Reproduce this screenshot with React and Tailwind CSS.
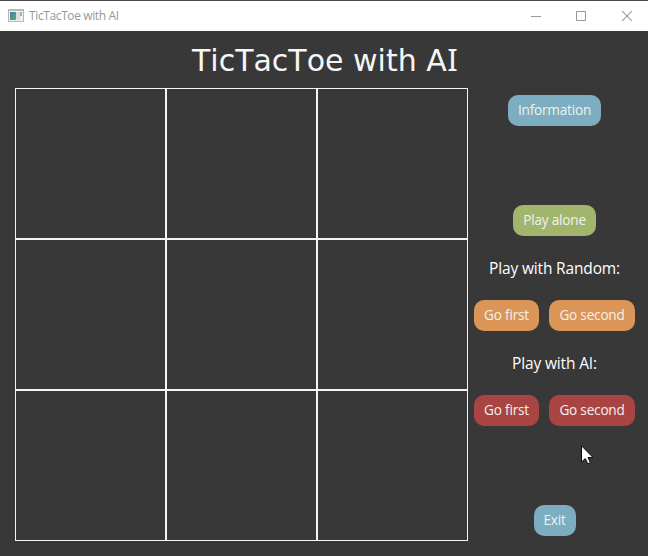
function PillButton({ children, className }) {
  return (
    <button
      type="button"
      className={`h-[31px] shrink-0 rounded-[10px] pb-px text-center whitespace-nowrap text-[13.6px] leading-[30px] tracking-[-0.2px] text-[#f1f1ee] ${className}`}
    >
      {children}
    </button>
  );
}

function AppIcon() {
  return (
    <svg width="16" height="14" viewBox="0 0 16 14" shapeRendering="crispEdges" aria-hidden="true">
      <defs>
        <linearGradient id="pane" x1="0" y1="0" x2="1" y2="1">
          <stop offset="0" stopColor="#4a7fa8" />
          <stop offset="1" stopColor="#4fae78" />
        </linearGradient>
      </defs>
      <rect x="0" y="0" width="16" height="13" fill="#b5b8bd" />
      <rect x="1" y="2" width="14" height="10" fill="#f1f2f4" />
      <rect x="2" y="3" width="6" height="8" fill="url(#pane)" />
      <rect x="8" y="3" width="4" height="8" fill="#dcdee2" />
      <rect x="12" y="3" width="2" height="4" fill="#8fb9c0" />
    </svg>
  );
}

function TitleBar() {
  return (
    <header className="flex h-[31px] shrink-0 items-center border-t border-[#4a484a] bg-white pl-2 text-[#979797]">
      <AppIcon />
      <span className="ml-[5px] whitespace-nowrap text-[12px] leading-[30px] tracking-[-0.38px]">
        TicTacToe with AI
      </span>
      <div className="ml-auto flex items-center pr-[15px]">
        <svg width="102" height="10" viewBox="0 0 102 10" fill="none" stroke="currentColor" aria-hidden="true">
          <path d="M0 5.5H10" />
          <path d="M45.5 .5H54.5V9.5H45.5Z" />
          <path d="M91.2 .2L100.8 9.8M100.8 .2L91.2 9.8" strokeWidth="1.1" />
        </svg>
      </div>
    </header>
  );
}

export default function App() {
  return (
    <div className="relative flex h-[556px] w-[648px] flex-col overflow-hidden bg-[#383838] font-['Open_Sans','Noto_Sans',sans-serif]">
      <TitleBar />
      <h1 className="ml-[192px] h-[57px] shrink-0 whitespace-nowrap font-['DejaVu_Sans',sans-serif] text-[30px] leading-[57px] [font-kerning:none] text-[#f6f6f6]">
        TicTacToe with A<span className="ml-[0.5px] font-['Noto_Sans',sans-serif] text-[31px]">I</span>
      </h1>
      <main className="flex pl-[15px]">
        <div className="grid size-[453px] grid-cols-3 grid-rows-3">
          {Array.from({ length: 9 }, (_, i) => (
            <div key={i} className="border border-[#f5f5f5]" />
          ))}
        </div>
        <aside className="ml-[6px] flex w-[161px] flex-col items-center pt-[7px]">
          <PillButton className="w-[93px] bg-[#7cadc1]">Information</PillButton>
          <PillButton className="mt-[79px] w-[83px] bg-[#a2b56c]">Play alone</PillButton>
          <p className="h-16 whitespace-nowrap text-[15.5px] leading-[64px] tracking-[-0.15px] text-white">
            Play with Random:
          </p>
          <div className="flex gap-[10px]">
            <PillButton className="w-[65px] bg-[#db9557]">Go first</PillButton>
            <PillButton className="w-[86px] bg-[#db9557]">Go second</PillButton>
          </div>
          <p className="h-16 whitespace-nowrap text-[15.5px] leading-[64px] tracking-[-0.15px] text-white">
            Play with AI:
          </p>
          <div className="flex gap-[10px]">
            <PillButton className="w-[65px] bg-[#aa4442]">Go first</PillButton>
            <PillButton className="w-[86px] bg-[#aa4442]">Go second</PillButton>
          </div>
          <PillButton className="mt-[79px] w-[42px] bg-[#7cadc1]">Exit</PillButton>
        </aside>
      </main>
      <svg className="absolute left-[581px] top-[445px]" width="13" height="20" viewBox="0 0 13 20" aria-hidden="true">
        <path
          d="M.5 .8V17L4.3 13.5L6.8 18.8L9.3 17.7L7 12.5H12Z"
          fill="#fff"
          stroke="#0d0d18"
        />
      </svg>
    </div>
  );
}
